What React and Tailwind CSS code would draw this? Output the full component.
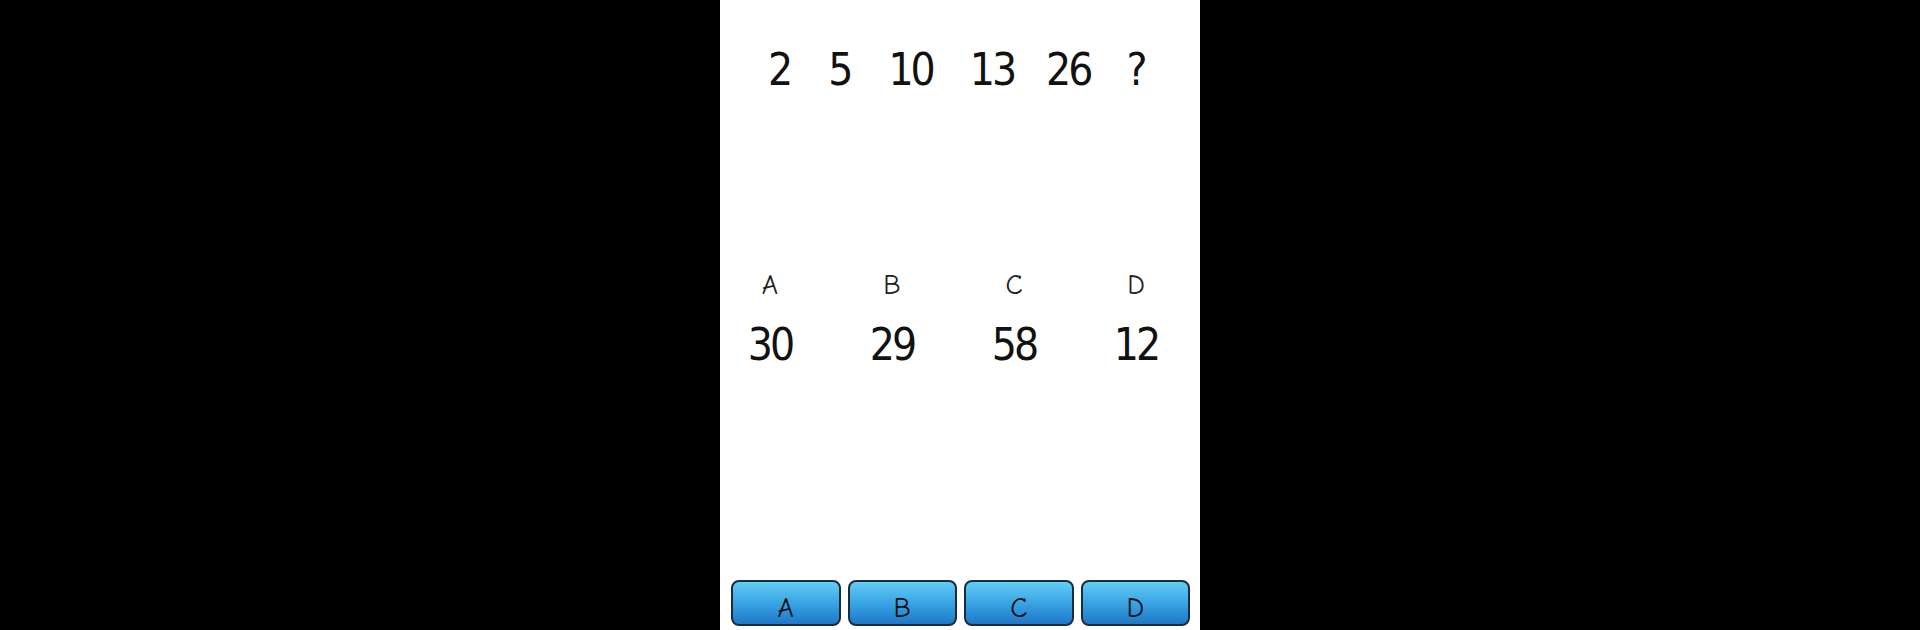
import React from "react";

const numFont = { fontFamily: '"DejaVu Sans Condensed", "DejaVu Sans", Tahoma, sans-serif' };
const comic = { fontFamily: '"Comic Sans MS", "Comic Neue", "DejaVu Sans", sans-serif' };

export default function App() {
  const seq = [
    ["2", ""],
    ["5", "ml-[38px]"],
    ["10", "ml-[38px]"],
    ["13", "ml-[37px]"],
    ["26", "ml-[32px]"],
    ["?", "ml-[36px]"],
  ];
  const answers = [
    ["A", "30"],
    ["B", "29"],
    ["C", "58"],
    ["D", "12"],
  ];
  return (
    <div className="w-[1920px] h-[630px] bg-black flex justify-center overflow-hidden">
      <div className="w-[480px] h-[630px] bg-white flex flex-col">
        <div
          className="mt-[48px] pl-[48px] flex text-[44px] leading-[44px] text-[#111] tracking-[-3px]"
          style={numFont}
        >
          {seq.map(([s, c], i) => (
            <span key={i} className={c}>
              {s}
            </span>
          ))}
        </div>
        <div className="mt-[180px] pl-[10px] flex gap-[42px]">
          {answers.map(([l, n]) => (
            <div key={l} className="w-[80px] flex flex-col items-center">
              <span className="text-[28px] leading-[27px] text-[#222]" style={comic}>
                {l}
              </span>
              <span
                className="mt-[24px] text-[44px] leading-[44px] text-[#111] tracking-[-3px]"
                style={numFont}
              >
                {n}
              </span>
            </div>
          ))}
        </div>
        <div className="mt-auto mb-[4px] pl-[11px] pr-[10px] flex gap-[7px]">
          {answers.map(([l]) => (
            <div
              key={l}
              className="flex-1 h-[46px] box-border border-2 border-[#1d2c3b] rounded-[8px] bg-gradient-to-b from-[#62cdf6] via-[#3aa4e4] to-[#1e78c8] flex justify-center pt-[13px]"
            >
              <span className="text-[28px] leading-[27px] text-[#111]" style={comic}>
                {l}
              </span>
            </div>
          ))}
        </div>
      </div>
    </div>
  );
}
